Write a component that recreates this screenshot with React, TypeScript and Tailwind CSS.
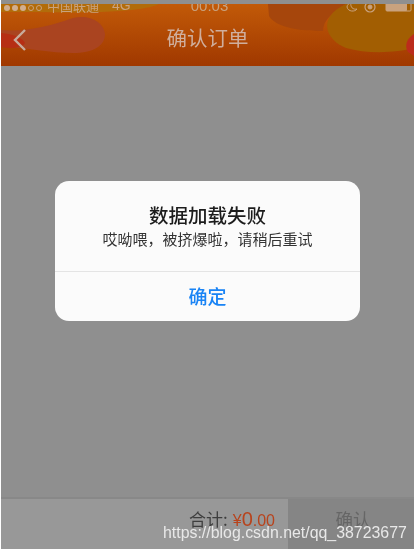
import React from "react";

const cjk = { fontFamily: '"Noto Sans CJK SC", "Noto Sans", sans-serif' };
const latin = { fontFamily: '"Liberation Sans", sans-serif' };

function Header() {
  return (
    <div className="relative h-[62px] overflow-hidden bg-[#a83c00]">
      <svg className="absolute inset-0 h-full w-full" viewBox="0 0 413 62" preserveAspectRatio="none">
        <defs>
          <linearGradient id="bg" x1="0" y1="0" x2="0" y2="1">
            <stop offset="0" stopColor="#c25a08" />
            <stop offset="1" stopColor="#a03800" />
          </linearGradient>
        </defs>
        <rect width="413" height="62" fill="url(#bg)" />
        <path d="M0 0H158C148 5 125 7 100 8 70 9 35 8 0 8Z" fill="#b26c0a" />
        <path d="M0 26C25 28 50 22 72 14 88 10 103 18 104 30 104 42 92 49 72 49 50 49 25 44 0 42Z" fill="#aa4420" />
        <path d="M0 29C12 30 22 34 24 39 21 44 10 45 0 43Z" fill="#b62e14" />
        <path d="M267 0H345C332 8 322 16 322 27 300 27 275 24 268 12Z" fill="#a6460c" />
        <path d="M345 0H413V44C395 49 365 50 345 44 325 36 315 14 345 0Z" fill="#a25e02" />
        <path d="M413 30C406 34 403 42 407 48L413 52Z" fill="#bb2c1c" />
      </svg>

      <div className="relative -mt-[6px] flex h-[14px] items-center leading-none text-[#c9a27e]">
        <div className="mt-[5px] flex w-[46px] items-center gap-[2px] pl-[3px]">
          {[0, 1, 2].map((i) => (
            <span key={i} className="h-[6px] w-[6px] rounded-full bg-[#d0ae90]" />
          ))}
          {[0, 1].map((i) => (
            <span key={i} className="h-[6px] w-[6px] rounded-full border border-[#c9a27e]" />
          ))}
        </div>
        <span className="text-[13px]" style={cjk}>中国联通</span>
        <span className="ml-[13px] text-[14px]" style={latin}>4G</span>
        <span className="ml-[60px] text-[15px]" style={latin}>00:03</span>
        <svg className="ml-[117px] mt-[6px]" width="67" height="14" viewBox="0 0 67 14" fill="none" stroke="#c9a27e">
          <path d="M6 2C5 6 8 9 12 8 10 11 3 11 2 6 2 4 4 2 6 2Z" strokeWidth="1" />
          <circle cx="25" cy="6" r="5" strokeWidth="1.2" />
          <circle cx="25" cy="6" r="2" fill="#c9a27e" />
          <rect x="41" y="2" width="21" height="8" rx="1" fill="#c9a27e" stroke="none" />
          <rect x="41" y="2" width="25" height="8" rx="1" strokeWidth="1" />
        </svg>
      </div>

      <div className="relative mt-[3px] flex h-[48px] items-center justify-center pb-[4px]">
        <svg className="absolute left-[11px] top-[13px]" width="15" height="24" viewBox="0 0 15 24" fill="none" stroke="#c8ab9c" strokeWidth="2.4">
          <path d="M13 2 3 12l10 10" />
        </svg>
        <span className="text-[20.5px] leading-none text-[#cfae9d]" style={cjk}>确认订单</span>
      </div>
    </div>
  );
}

function Dialog() {
  return (
    <div className="absolute left-[55px] top-[181px] flex h-[140px] w-[305px] flex-col rounded-[14px] bg-[#fbfbfb]" style={cjk}>
      <div className="flex h-[91px] flex-col items-center border-b border-[#e4e4e4] pt-[21px]">
        <span className="text-[19.5px] font-medium leading-[26px] text-[#1c1c1c]">数据加载失败</span>
        <span className="text-[15px] leading-[22px] text-[#333333]">哎呦喂，被挤爆啦，请稍后重试</span>
      </div>
      <div className="flex flex-1 items-center justify-center text-[19px] font-medium text-[#1a84f5]">确定</div>
    </div>
  );
}

function Footer() {
  return (
    <div className="flex h-[52px] border-t-2 border-[#888888] bg-[#989898]" style={cjk}>
      <div className="flex flex-1 justify-end pr-[13px] pt-[6px]">
        <span className="text-[17px] leading-[28px] text-[#3e3e3e]">合计:</span>
        <span className="ml-[5px] text-[16px] leading-[28px] text-[#b8431c]" style={latin}>
          ¥<span className="text-[20px]">0</span>.00
        </span>
      </div>
      <div className="flex w-[126px] justify-center bg-[#858585] pt-[6px] pl-[4px] text-[17.5px] leading-[28px] text-[#666666]">确认</div>
    </div>
  );
}

export default function App() {
  return (
    <div className="relative h-[552px] w-[417px] overflow-hidden bg-white">
      <div className="blur-[0.5px]">
        <div className="ml-[1px] flex h-[549px] w-[413px] flex-col bg-[#8f8f8f] pt-[4px]">
          <Header />
          <div className="flex-1" />
          <Footer />
        </div>
        <Dialog />
        <div className="absolute left-[163px] top-[523px] text-[15.9px] leading-[20px] text-[#e8e8e8]" style={latin}>
          https://blog.csdn.net/qq_38723677
        </div>
      </div>
    </div>
  );
}
